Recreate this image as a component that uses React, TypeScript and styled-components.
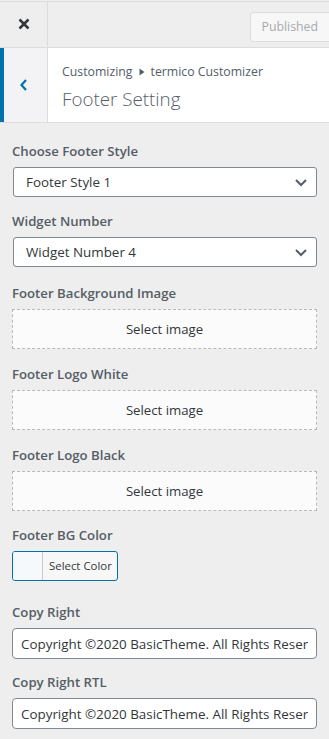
import React from "react";
import styled, { createGlobalStyle } from "styled-components";

const Global = createGlobalStyle`
  html, body { margin: 0; padding: 0; background: #eeeeee; }
  body { font-family: "Open Sans", "Noto Sans", sans-serif; color: #555d66; }
  * { box-sizing: border-box; }
`;

const Page = styled.div`
  width: 329px;
  min-height: 739px;
  background: #eeeeee;
  overflow: hidden;
`;

const TopBar = styled.header`
  margin-top: 1px;
  height: 47px;
  border-top: 1px solid #dddddd;
  border-bottom: 1px solid #dddddd;
  display: flex;
  align-items: stretch;
  justify-content: space-between;
`;

const CloseButton = styled.button`
  width: 48px;
  border: none;
  border-right: 1px solid #dddddd;
  background: transparent;
  display: flex;
  align-items: center;
  justify-content: center;
  padding: 0;
  margin-top: -1px;
`;

const PublishedButton = styled.div`
  margin-top: 10px;
  margin-right: -12px;
  height: 30px;
  padding: 0 22px 0 10px;
  border: 1px solid #dddddd;
  border-radius: 3px;
  background: #f7f7f7;
  color: #a7aaad;
  font-size: 12.3px;
  line-height: 28px;
  align-self: flex-start;
`;

const SectionHead = styled.div`
  height: 75px;
  background: #ffffff;
  border-bottom: 1px solid #dddddd;
  display: flex;
  align-items: stretch;
`;

const BackButton = styled.button`
  width: 48px;
  border: none;
  border-left: 4px solid #0073aa;
  border-right: 1px solid #dddddd;
  background: #f3f3f5;
  display: flex;
  align-items: center;
  justify-content: center;
  padding: 0 4px 0 0;
`;

const TitleBlock = styled.div`
  padding: 14px 0 0 14px;
  display: flex;
  flex-direction: column;
`;

const Crumb = styled.span`
  font-size: 12.3px;
  line-height: 20px;
  color: #555d66;
  display: flex;
  align-items: center;
  gap: 6px;
`;

const Title = styled.h2`
  margin: 5px 0 0;
  font-size: 18.8px;
  line-height: 24px;
  font-weight: 300;
  color: #555d66;
`;

const Controls = styled.div`
  padding: 16px 12px 12px 12px;
  display: flex;
  flex-direction: column;
`;

const Control = styled.div<{ $mb?: number }>`
  margin-bottom: ${(p) => (p.$mb ?? 13)}px;
`;

const Label = styled.label`
  display: block;
  font-size: 13.2px;
  font-weight: 600;
  line-height: 24px;
  margin-bottom: 4px;
  color: #555d66;
`;

const SelectBox = styled.div`
  margin-left: 1px;
  height: 30px;
  border: 1px solid #7e8993;
  border-radius: 3px;
  background: #ffffff;
  display: flex;
  align-items: center;
  justify-content: space-between;
  padding: 0 8px 0 12px;
  font-size: 13.4px;
  color: #32373c;
`;

const DropZone = styled.div`
  height: 40px;
  border: 1px dashed #b4b9be;
  background: #fbfbfb;
  display: flex;
  align-items: center;
  justify-content: center;
  font-size: 13.2px;
  color: #32373c;
`;

const ColorButton = styled.div`
  width: 106px;
  height: 30px;
  border: 1px solid #0073aa;
  border-radius: 3px;
  background: #f7f7f7;
  display: flex;
  align-items: stretch;
  overflow: hidden;
`;

const Swatch = styled.span`
  width: 30px;
  background: #f5f9fc;
  border-right: 1px solid #cccccc;
`;

const ColorText = styled.span`
  flex: 1;
  font-size: 11.4px;
  line-height: 28px;
  color: #32373c;
  padding-left: 6px;
`;

const TextInput = styled.input`
  width: 100%;
  height: 31px;
  border: 1px solid #7e8993;
  border-radius: 4px;
  background: #ffffff;
  padding: 0 8px;
  font-family: inherit;
  font-size: 13.4px;
  color: #32373c;
  outline: none;
`;

const Chevron = () => (
  <svg width="14" height="10" viewBox="0 0 14 10">
    <path d="M2 3 L7 8 L12 3" fill="none" stroke="#555d66" strokeWidth="2" />
  </svg>
);

const Select = ({ value }: { value: string }) => (
  <SelectBox>
    <span>{value}</span>
    <Chevron />
  </SelectBox>
);

export default function App() {
  const copy = "Copyright ©2020 BasicTheme. All Rights Reserved.";
  return (
    <Page>
      <Global />
      <TopBar>
        <CloseButton aria-label="Close">
          <svg width="14" height="14" viewBox="0 0 14 14">
            <path d="M2.5 2.5 L11.5 11.5 M11.5 2.5 L2.5 11.5" stroke="#32373c" strokeWidth="2.5" />
          </svg>
        </CloseButton>
        <PublishedButton>Published</PublishedButton>
      </TopBar>
      <SectionHead>
        <BackButton aria-label="Back">
          <svg width="10" height="14" viewBox="0 0 10 14">
            <path d="M7 2 L2.5 7 L7 12" fill="none" stroke="#0073aa" strokeWidth="2.2" />
          </svg>
        </BackButton>
        <TitleBlock>
          <Crumb>
            Customizing
            <svg width="6" height="8" viewBox="0 0 6 8">
              <path d="M0.5 0.5 L5.5 4 L0.5 7.5 Z" fill="#555d66" />
            </svg>
            termico Customizer
          </Crumb>
          <Title>Footer Setting</Title>
        </TitleBlock>
      </SectionHead>
      <Controls>
        <Control $mb={12}>
          <Label>Choose Footer Style</Label>
          <Select value="Footer Style 1" />
        </Control>
        <Control $mb={14}>
          <Label>Widget Number</Label>
          <Select value="Widget Number 4" />
        </Control>
        <Control>
          <Label>Footer Background Image</Label>
          <DropZone>Select image</DropZone>
        </Control>
        <Control>
          <Label>Footer Logo White</Label>
          <DropZone>Select image</DropZone>
        </Control>
        <Control $mb={12}>
          <Label>Footer Logo Black</Label>
          <DropZone>Select image</DropZone>
        </Control>
        <Control $mb={19}>
          <Label>Footer BG Color</Label>
          <ColorButton>
            <Swatch />
            <ColorText>Select Color</ColorText>
          </ColorButton>
        </Control>
        <Control $mb={11}>
          <Label>Copy Right</Label>
          <TextInput defaultValue={copy} />
        </Control>
        <Control>
          <Label>Copy Right RTL</Label>
          <TextInput defaultValue={copy} />
        </Control>
      </Controls>
    </Page>
  );
}
